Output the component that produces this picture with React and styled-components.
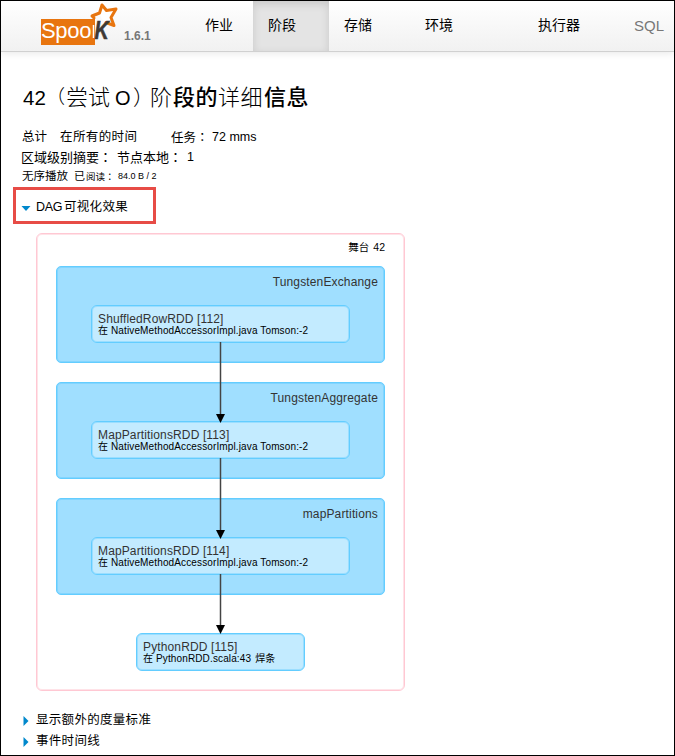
import React from "react";
import styled, { createGlobalStyle } from "styled-components";

const Global = createGlobalStyle`
  html, body { margin: 0; padding: 0; background: #fff; }
  *, *::before, *::after { box-sizing: border-box; }
`;

const Page = styled.div`
  width: 675px;
  height: 756px;
  overflow: hidden;
  border: 1px solid #000;
  background: #fff;
  color: #000;
  font-family: "Liberation Sans", "Noto Sans CJK SC", sans-serif;
`;

const Header = styled.header`
  display: flex;
  height: 51px;
  border-bottom: 1px solid #d0d0d0;
  background: linear-gradient(#fff, #f1f1f1);
  box-shadow: 0 1px 8px rgba(0, 0, 0, 0.1);
`;

const Brand = styled.div`
  display: flex;
  width: 177px;
  padding-left: 40px;
`;

const BrandName = styled.div`
  width: 54px;
  height: 26px;
  margin-top: 18px;
  background: #e8750f;
  color: #fff;
  font-size: 22px;
  line-height: 24px;
  letter-spacing: -0.3px;
  white-space: nowrap;
`;

const BrandMark = styled.svg`
  flex: none;
  width: 34px;
  height: 42px;
  margin-left: -10px;
  overflow: visible;
`;

const Version = styled.span`
  margin: 28px 0 0 5px;
  color: #777;
  font-size: 12px;
  font-weight: bold;
  line-height: 14px;
`;

const Tab = styled.a`
  width: ${(p) => p.$width}px;
  height: 50px;
  padding-left: ${(p) => p.$pad}px;
  color: ${(p) => (p.$muted ? "#777" : "#000")};
  background: ${(p) => (p.$active ? "#e4e4e4" : "transparent")};
  box-shadow: ${(p) => (p.$active ? "inset 0 3px 8px rgba(0,0,0,.125)" : "none")};
  font-size: ${(p) => (p.$muted ? 15 : 14)}px;
  line-height: 49px;
  white-space: nowrap;
`;

const Main = styled.main`
  padding-left: 21px;
`;

const Title = styled.h1`
  display: flex;
  height: 34px;
  margin: 29px 0 0;
  font-size: 20px;
  font-weight: 400;
  line-height: 34px;
  white-space: pre;
`;

const Part = styled.span`
  flex: none;
  width: ${(p) => (p.$width ? `${p.$width}px` : "auto")};
  margin-left: ${(p) => p.$gap || 0}px;
  font-size: ${(p) => (p.$size ? `${p.$size}px` : "inherit")};
  font-weight: ${(p) => p.$weight || "inherit"};
  letter-spacing: ${(p) => p.$track || 0}px;
  white-space: pre;
`;

const Colon = styled.span`
  font-family: "Noto Sans CJK TC", sans-serif;
`;

const Summary = styled.div`
  display: flex;
  height: ${(p) => p.$height}px;
  margin-top: ${(p) => p.$top || 0}px;
  font-size: 12.5px;
  line-height: ${(p) => p.$height}px;
`;

const Toggle = styled.div`
  display: flex;
  align-items: center;
  height: 21px;
  font-size: 12.5px;
  line-height: 21px;
`;

const Highlight = styled.div`
  width: 143px;
  height: 37px;
  margin: 1px 0 0 -9px;
  padding: 7px 0 0 5px;
  border: 3px solid #e74c46;
`;

const Caret = styled.svg`
  flex: none;
  width: 10px;
  height: 10px;
  margin-right: 4px;
`;

const Stage = styled.section`
  display: flex;
  flex-direction: column;
  width: 369px;
  height: 458px;
  margin: 9px 0 19px 14px;
  padding: 0 19px;
  border: 1.5px solid #ffc8d3;
  box-shadow: inset 0 0 0 1px rgba(255, 192, 203, 0.45);
  border-radius: 6px;
`;

const StageLabel = styled.div`
  display: flex;
  flex: none;
  justify-content: flex-end;
  gap: 4px;
  height: 32px;
  padding-top: 5px;
  font-size: 10.5px;
  line-height: 17px;
`;

const Cluster = styled.div`
  flex: none;
  height: 97px;
  margin-bottom: 19px;
  padding-left: 34px;
  background: #a0dfff;
  border: 1px solid #63cdff;
  box-shadow: inset 0 0 0 1px rgba(62, 192, 255, 0.3);
  border-radius: 5px;
`;

const ClusterLabel = styled.div`
  height: 38px;
  padding: 6px 6px 0 0;
  color: #333;
  font-size: 12px;
  line-height: 18px;
  text-align: right;
  letter-spacing: 0.15px;
`;

const Node = styled.div`
  position: relative;
  flex: none;
  width: ${(p) => (p.$small ? 169 : 259)}px;
  height: 38px;
  margin: ${(p) => (p.$small ? "19px 0 0 80px" : 0)};
  padding: 6px 0 0 6px;
  background: #c3ebff;
  border: 1px solid #63cdff;
  box-shadow: inset 0 0 0 1px rgba(62, 192, 255, 0.3);
  border-radius: 6px;
`;

const NodeName = styled.div`
  height: 12px;
  color: #333;
  font-size: 12px;
  line-height: 14px;
  letter-spacing: 0.13px;
  white-space: nowrap;
`;

const NodeSource = styled.div`
  display: flex;
  gap: 3px;
  height: 12px;
  font-size: 10px;
  line-height: 13px;
  white-space: nowrap;
`;

const Arrow = styled.svg`
  position: absolute;
  z-index: 1;
  left: 123px;
  top: 36px;
  width: 11px;
  height: ${(p) => p.height}px;
`;

function CaretIcon({ open }) {
  return (
    <Caret viewBox="0 0 10 10">
      <path d={open ? "M0.5 3h9L5 8z" : "M1.5 0v10l5-5z"} fill="#0088cc" />
    </Caret>
  );
}

function RddNode({ name, source, suffix, small, arrow }) {
  return (
    <Node $small={small}>
      <NodeName>{name}</NodeName>
      <NodeSource>
        <Part>在</Part>
        <Part $track={0.13}>{source}</Part>
        {suffix && <Part $gap={1}>{suffix}</Part>}
      </NodeSource>
      {arrow && (
        <Arrow height={arrow} viewBox={`0 0 11 ${arrow}`}>
          <path d={`M5.5 0V${arrow - 6}`} stroke="#444" strokeWidth="1.5" />
          <path d={`M1 ${arrow - 9}h9l-4.5 9z`} fill="#000" />
        </Arrow>
      )}
    </Node>
  );
}

const clusters = [
  { label: "TungstenExchange", name: "ShuffledRowRDD [112]", arrow: 81 },
  { label: "TungstenAggregate", name: "MapPartitionsRDD [113]", arrow: 81 },
  { label: "mapPartitions", name: "MapPartitionsRDD [114]", arrow: 60 },
];

export default function App() {
  return (
    <>
      <Global />
      <Page>
        <Header>
          <Brand>
            <BrandName>Spoo</BrandName>
            <BrandMark viewBox="0 0 34 42">
              <path d="M8.5 24v13" stroke="#fff" strokeWidth="1.5" />
              <path d="M14 12.5L17 4l4.500 5.500L31 8l-5 8.500 3 8-9-3.500-3-3-3-6z" fill="#fff" />
              <path d="M9 17L7 15l7.500-3L17 4l4.500 5.500L31 8l-5 8.500 3 8-8-3" fill="none" stroke="#e8750f" strokeWidth="3" strokeLinejoin="round" strokeLinecap="round" />
              <text transform="translate(9.500 38) scale(.76 1)" fill="#3d3935" stroke="#3d3935" strokeWidth=".6" fontSize="26" fontWeight="700" fontStyle="italic" fontFamily="Liberation Sans">K</text>
            </BrandMark>
            <Version>1.6.1</Version>
          </Brand>
          <Tab $width={75} $pad={27}>作业</Tab>
          <Tab $width={76} $pad={15} $active>阶段</Tab>
          <Tab $width={81} $pad={15}>存储</Tab>
          <Tab $width={112} $pad={15}>环境</Tab>
          <Tab $width={96} $pad={16}>执行器</Tab>
          <Tab $width={56} $pad={16} $muted>SQL</Tab>
        </Header>
        <Main>
          <Title>
            <Part $width={23} $gap={1} $size={20.5}>42</Part>
            <Part $width={19} $size={19} $weight={300}>（</Part>
            <Part $width={49} $gap={1} $size={22} $weight={300}>尝试</Part>
            <Part $width={18}>O</Part>
            <Part $size={21} $weight={300} $track={-5}>）</Part>
            <Part $width={23} $gap={1} $size={22} $weight={300}>阶</Part>
            <Part $width={45} $size={22} $weight={500} $track={0.5}>段的</Part>
            <Part $width={46} $size={22} $weight={300} $track={0.5}>详细</Part>
            <Part $size={22} $weight={500} $track={0.5}>信息</Part>
          </Title>
          <Summary $height={20} $top={12}>
            <Part $width={38}>总计</Part>
            <Part $width={111} $track={0.4}>在所有的时间</Part>
            <Part $width={41}>任务<Colon>：</Colon></Part>
            <Part>72 mms</Part>
          </Summary>
          <Summary $height={20}>
            <Part $width={96} $gap={-1} $size={13}>区域级别摘要<Colon>：</Colon></Part>
            <Part $width={69} $size={13}>节点本地<Colon>：</Colon></Part>
            <Part $gap={1}>1</Part>
          </Summary>
          <Summary $height={19}>
            <Part $width={52} $size={11.5}>无序播放</Part>
            <Part $width={12} $size={11}>已</Part>
            <Part $width={32} $size={9.5}>阅读<Colon>：</Colon></Part>
            <Part $size={9}>84.0 B / 2</Part>
          </Summary>
          <Highlight>
            <Toggle>
              <CaretIcon open />
              <Part $width={28} $gap={1} $track={-0.3}>DAG</Part>
              <Part $track={0.3}>可视化效果</Part>
            </Toggle>
          </Highlight>
          <Stage>
            <StageLabel>
              <Part>舞台</Part>
              <Part>42</Part>
            </StageLabel>
            {clusters.map((c) => (
              <Cluster key={c.name}>
                <ClusterLabel>{c.label}</ClusterLabel>
                <RddNode name={c.name} arrow={c.arrow} source="NativeMethodAccessorImpl.java Tomson:-2" />
              </Cluster>
            ))}
            <RddNode small name="PythonRDD [115]" source="PythonRDD.scala:43" suffix="焊条" />
          </Stage>
          <Toggle>
            <CaretIcon />
            <Part $track={0.3}>显示额外的度量标准</Part>
          </Toggle>
          <Toggle>
            <CaretIcon />
            <Part $track={0.3}>事件时间线</Part>
          </Toggle>
        </Main>
      </Page>
    </>
  );
}
